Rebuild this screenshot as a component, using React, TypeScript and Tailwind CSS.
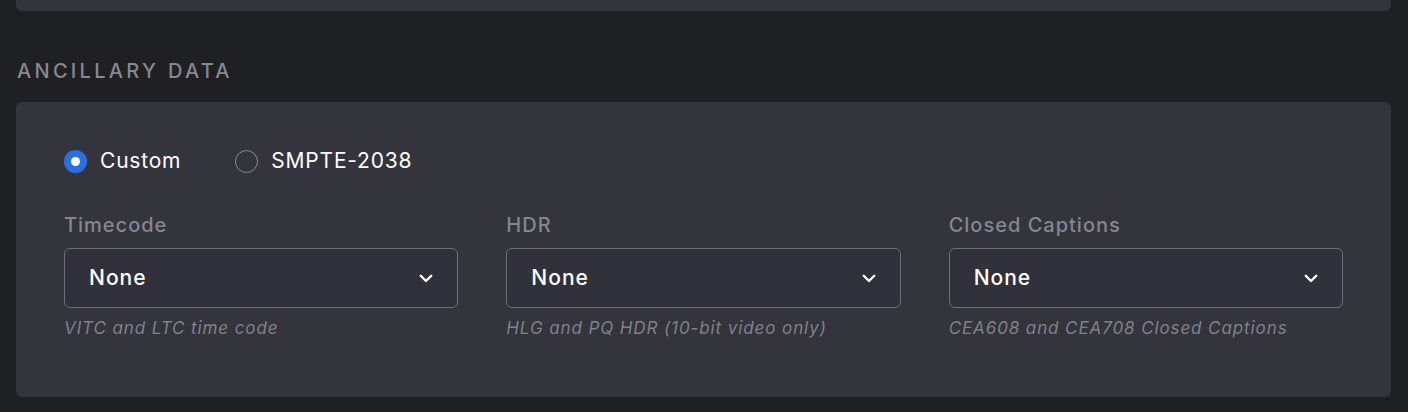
import React from "react";

const fields = [
  { label: "Timecode", value: "None", hint: "VITC and LTC time code" },
  { label: "HDR", value: "None", hint: "HLG and PQ HDR (10-bit video only)" },
  { label: "Closed Captions", value: "None", hint: "CEA608 and CEA708 Closed Captions" },
];

const Radio = ({ checked, label }: { checked: boolean; label: string }) => (
  <label className="flex items-center gap-[13px] cursor-pointer">
    {checked ? (
      <span className="flex items-center justify-center w-[23px] h-[23px] rounded-full bg-[#2b6fe3]">
        <span className="w-[9px] h-[9px] rounded-full bg-white" />
      </span>
    ) : (
      <span className="w-[23px] h-[23px] rounded-full border-[1.5px] border-[#8a8b94]" />
    )}
    <span className="text-[21px] leading-[24px] tracking-[0.8px] text-white">{label}</span>
  </label>
);

const Select = ({ label, value, hint }: { label: string; value: string; hint: string }) => (
  <div className="flex flex-col">
    <span className="text-[20px] font-medium leading-[24px] tracking-[1px] text-[#85868f]">{label}</span>
    <button className="mt-[11px] flex items-center justify-between h-[60px] px-6 rounded-[6px] border border-[#6d6e78] bg-[#30313a] text-left">
      <span className="text-[21px] font-medium tracking-[1px] text-white">{value}</span>
      <svg width="18" height="18" viewBox="0 0 24 24" fill="none" stroke="white" strokeWidth="3.2" strokeLinecap="round" strokeLinejoin="round" className="mr-[-2px]">
        <path d="M5 9l7 7 7-7" />
      </svg>
    </button>
    <span className="mt-[9px] text-[17px] leading-[22px] italic tracking-[0.9px] text-[#80818a]">{hint}</span>
  </div>
);

export default function App() {
  return (
    <div className="w-[1408px] h-[412px] bg-[#1f2023] overflow-hidden font-['Inter',sans-serif]">
      <div className="pl-4 pr-4">
        <div className="h-[15px] mt-[-4px] rounded-b-[6px] bg-[#33343c] mr-[1px]" />
        <h2 className="mt-[48px] ml-[1px] text-[20px] font-medium leading-[24px] tracking-[3.3px] text-[#878892]">
          ANCILLARY DATA
        </h2>
        <div className="mt-[19px] mr-[1px] h-[295px] rounded-[6px] bg-[#33343c] px-12 pt-[47px]">
          <div className="flex items-center gap-[54px] h-[24px]">
            <Radio checked label="Custom" />
            <Radio checked={false} label="SMPTE-2038" />
          </div>
          <div className="mt-[40px] grid grid-cols-3 gap-12">
            {fields.map((f) => (
              <Select key={f.label} {...f} />
            ))}
          </div>
        </div>
      </div>
    </div>
  );
}
